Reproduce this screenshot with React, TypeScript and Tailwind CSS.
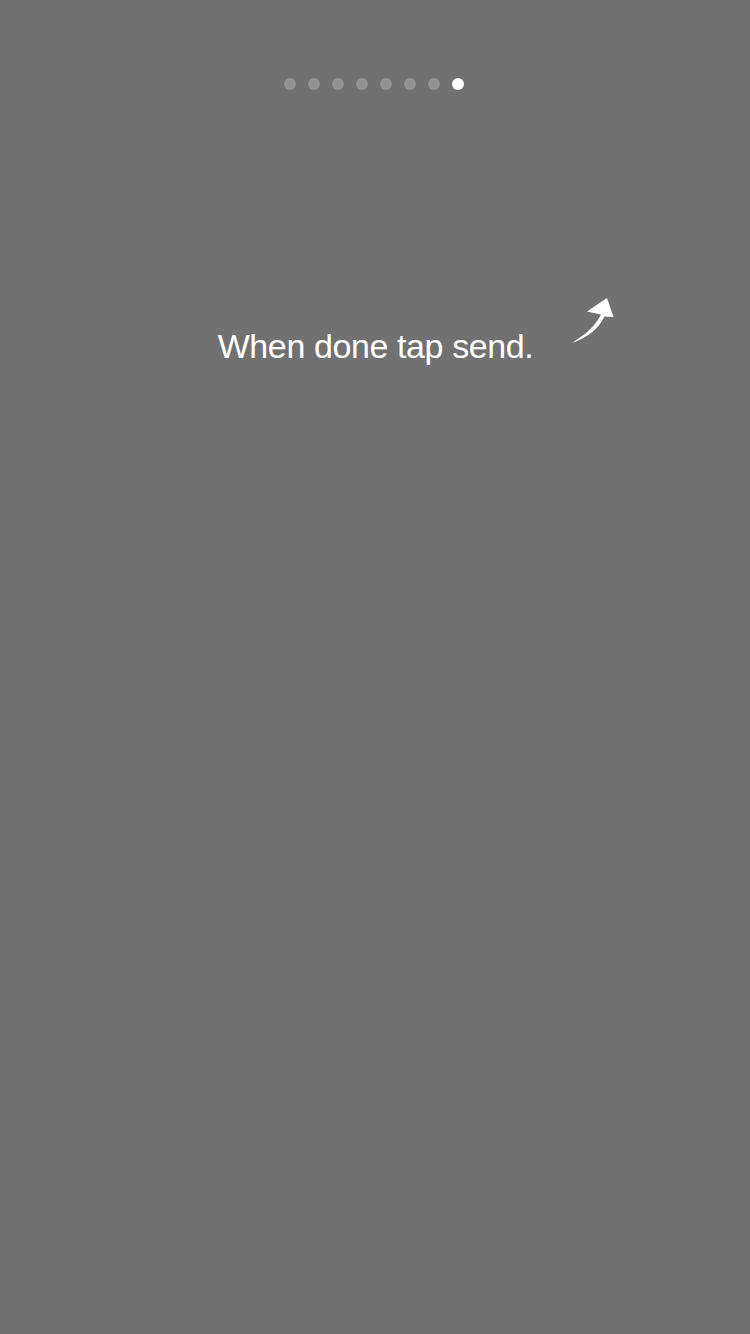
import React from "react";

export default function App() {
  const dots = [0, 1, 2, 3, 4, 5, 6, 7];
  return (
    <div className="relative w-[750px] h-[1334px] bg-[#717171] flex flex-col items-center" style={{ fontFamily: '"Liberation Sans", Arial, sans-serif' }}>
      <div className="flex gap-[12px] mt-[78px] mr-[2px]">
        {dots.map((i) => (
          <div
            key={i}
            className={i === 7 ? "w-[12px] h-[12px] rounded-full bg-white" : "w-[12px] h-[12px] rounded-full bg-[#939393]"}
          />
        ))}
      </div>
      <div className="mt-[236px] text-white text-[34px] leading-[40px] tracking-[-0.4px] ml-[1px]">When done tap send.</div>
      <svg
        className="absolute left-[560px] top-[290px]"
        width="64"
        height="60"
        viewBox="560 290 64 60"
      >
        <path
          d="M572 343 C582 336 592 330 599 318 L601 314.5 L587 311.5 L607 298 L613.5 317 L604.5 316.5 C598 330 586 338 572 343 Z"
          fill="#ffffff"
        />
      </svg>
    </div>
  );
}
